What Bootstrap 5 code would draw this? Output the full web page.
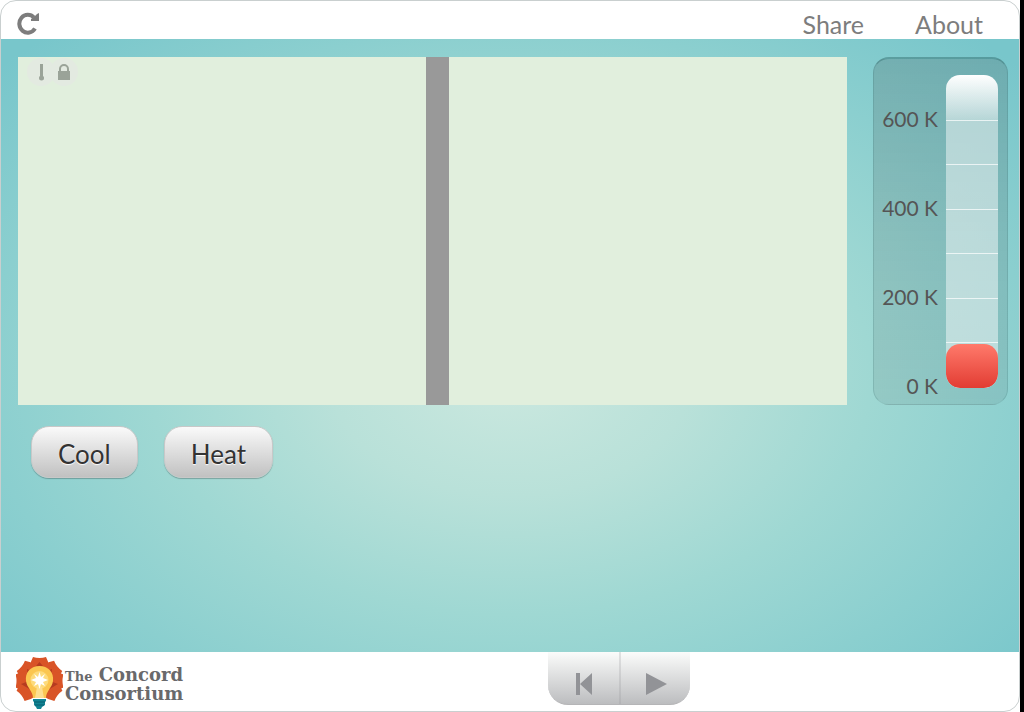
<!DOCTYPE html>
<html lang="en">
<head>
<meta charset="utf-8">
<meta name="viewport" content="width=device-width, initial-scale=1">
<title>Concord Consortium Interactive</title>
<link href="https://cdn.jsdelivr.net/npm/bootstrap@5.3.0/dist/css/bootstrap.min.css" rel="stylesheet">
<script src="https://cdn.jsdelivr.net/npm/bootstrap@5.3.0/dist/js/bootstrap.bundle.min.js" defer></script>
<style>
body{background:#000;font-family:Lato,sans-serif;color:#7d7d7d}
.page{margin-right:4px;background:#fff}
.shell{border:1px solid #c9cfcf;border-radius:16px;background:#fff;overflow:hidden}
.topbar{height:38px;padding:0 36px 0 16px;font-size:25px;line-height:38px}
.topbar button{padding-top:5px}
.topbar nav{gap:51px}
.topbar a{color:#7d7d7d;padding-top:4px}
.stage{margin:0 -1px;padding:18px 12px 0 18px;background:radial-gradient(ellipse farthest-corner at 50% 55%,#cbe8df 0,#b9e1d9 25%,#9fd8d3 50%,#8bcfcf 73%,#78c6cb 96%)}
.apparatus{gap:26px}
.sim{height:348px;background:#e1efdd;position:relative}
.wall{width:23px;height:100%;margin-left:408px;background:#999}
.marks{position:absolute;left:9px;top:1px}
.thermo{width:135px;height:348px;border:1px solid rgba(0,60,60,.12);border-top:2px solid rgba(0,60,60,.25);border-bottom-color:rgba(0,60,60,.04);border-radius:16px;background:linear-gradient(rgba(80,100,100,.26),rgba(80,100,100,.12));padding:16px 9px 16px 0}
.scale{font-size:21px;line-height:24px;color:#555;padding:32px 0 0;text-align:right;display:grid;grid-template-rows:repeat(4,89px)}
.tube{width:52px;height:313px;border-radius:14px;overflow:hidden;background:linear-gradient(#fff,rgba(255,255,255,0) 46px),linear-gradient(rgba(255,255,255,.7) 1px,transparent 1px 44px,rgba(255,255,255,.7) 44px 45px,transparent 45px) 0 45px/100% 89px,rgba(255,255,255,.46)}
.fill{height:44px;border-radius:14px;background:linear-gradient(#ff7a6b,#e23c33)}
.actions{gap:26px;padding:21px 0 0 13px}
.pill{height:52px;border:1px solid #c8c8c8;border-radius:18px;background:linear-gradient(#fafafa,#c1c1c1);font-size:26px;line-height:30px;color:#333;padding:4px 26px 0;box-shadow:0 1px 1px rgba(0,0,0,.25);text-shadow:0 1px 1px #fff}
.foot{height:59px;padding-left:15px}
.brand{color:#69696b;font:bold 18px/17px "DejaVu Serif",serif;gap:2px}
.brand small{font-size:13px}
.brand svg{margin-top:5px}
.brand div{margin-top:14px}
.player{position:absolute;left:547px;width:142px;height:53px;border-radius:0 0 20px 20px;overflow:hidden;background:linear-gradient(#fbfcfb,#bcbdbf);border-bottom:1px solid #b5b5b7}
.player button{width:50%;border:0;background:none;padding:11px 0 0}
.player button+button{border-left:2px solid rgba(150,150,155,.25)}
</style>
</head>
<body>
<div class="page">
<main class="shell d-flex flex-column vh-100">
<header class="topbar d-flex justify-content-between">
<button class="border-0 bg-transparent px-0 pb-0 d-flex align-items-center" aria-label="Reload"><svg width="24" height="24" viewBox="0 0 24 24"><path d="M18 17.500A8.500 9 0 1 1 17 6.500" fill="none" stroke="#7d7d7d" stroke-width="4"/><path d="M22 2v8h-8V8l3-2 2-2 1-1z" fill="#7d7d7d"/></svg></button>
<nav class="d-flex"><a class="text-decoration-none" href="#">Share</a><a class="text-decoration-none" href="#">About</a></nav>
</header>
<section class="stage flex-grow-1">
<div class="apparatus d-flex">
<div class="sim flex-grow-1"><div class="wall"></div>
<svg class="marks" width="54" height="28" viewBox="0 0 54 28"><circle cx="14" cy="14" r="14" fill="#e3eae1"/><circle cx="37" cy="14" r="14" fill="#e3eae1"/><path d="M13 6h3v13h-3z" fill="#9aa398"/><circle cx="14.500" cy="20" r="2.500" fill="#9aa398"/><path d="M31 13h12v9H31z" fill="#9aa398"/><path d="M33 14v-3a4 4 0 0 1 8 0v3" fill="none" stroke="#9aa398" stroke-width="2"/></svg></div>
<div class="thermo d-flex justify-content-end gap-2 flex-shrink-0">
<div class="scale"><span>600 K</span><span>400 K</span><span>200 K</span><span>0 K</span></div>
<div class="tube d-flex flex-column justify-content-end"><div class="fill"></div></div></div>
</div>
<div class="actions d-flex"><button class="pill">Cool</button><button class="pill">Heat</button></div>
</section>
<footer class="foot position-relative d-flex">
<a href="#" class="brand d-flex align-items-start text-decoration-none">
<svg width="47" height="53" viewBox="0 0 47 53">
<g fill="#d95427"><path id="petal" d="M23.500 25L14 11Q14 5 17 0Q20 1 23.500 1Q27 1 30 0Q33 5 33 11z"/><use href="#petal" transform="rotate(51 23.500 24)"/><use href="#petal" transform="rotate(90 23.500 24)"/><use href="#petal" transform="rotate(128 23.500 24)"/><use href="#petal" transform="rotate(-51 23.500 24)"/><use href="#petal" transform="rotate(-90 23.500 24)"/><use href="#petal" transform="rotate(-128 23.500 24)"/></g>
<path d="M23.500 5l6 7h-12zM11 12l7 3-6 5zM36 12l-7 3 6 5zM5 27l8-3 2 9zM42 27l-8-3-2 9z" fill="#b63b20"/>
<path d="M23.500 9C14 9 9 16 10 24C11 31 17 34 17 41h13c0-7 6-10 7-17C38 16 33 9 23.500 9z" fill="#fbc650"/>
<circle cx="23.500" cy="23" r="9" fill="#fddb7c"/><path d="M21 30h5l2 11h-9z" fill="#fddf91"/>
<path d="M23.500 15l1.500 5 4-3-2 4 5 2-5 2 2 4-4-2-1.500 5-1.500-5-4 2 2-4-5-2 5-2-2-4 4 3z" fill="#fff"/>
<path d="M17 42h13v2l-1 1v3l-3 2-1 2h-4l-1-2-2-2v-3l-1-1z" fill="#128494"/><path d="M18 45h11M19 48h9" stroke="#075e70"/>
</svg>
<div><small>The</small> Concord<br>Consortium</div></a>
<div class="player d-flex">
<button aria-label="Back to start"><svg width="18" height="24" viewBox="0 0 18 24"><path d="M1 1h4v22H1zM17 1v22L5 12z" fill="#929397"/></svg></button>
<button aria-label="Play"><svg width="22" height="24" viewBox="0 0 22 24"><path d="M1 1l21 11L1 23z" fill="#929397"/></svg></button>
</div>
</footer>
</main>
</div>
</body>
</html>
